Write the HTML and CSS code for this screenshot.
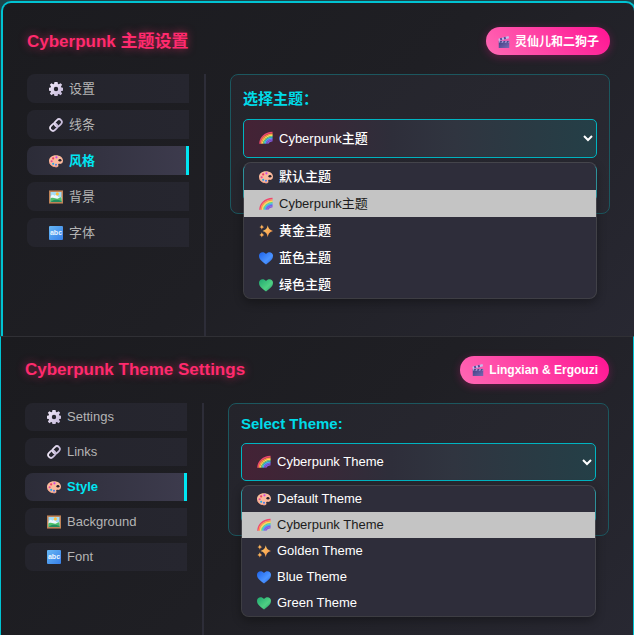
FILE: index.html
```html
<!DOCTYPE html>
<html lang="zh-CN">
<head>
<meta charset="utf-8">
<meta name="viewport" content="width=device-width, initial-scale=1">
<title>Cyberpunk</title>
<link rel="stylesheet" href="styles.css">
</head>
<body>
<svg class="sprite" aria-hidden="true">
  <defs>
    <linearGradient id="g-steel" x1="0" y1="0" x2="1" y2="1"><stop offset="0" stop-color="#f4ecfb"/><stop offset="1" stop-color="#c0b4d6"/></linearGradient>
    <linearGradient id="g-star" x1="0" y1="0" x2="1" y2="1"><stop offset="0" stop-color="#ffd36a"/><stop offset="1" stop-color="#f98a45"/></linearGradient>
    <linearGradient id="g-blue" x1="0" y1="0" x2="1" y2="1"><stop offset="0" stop-color="#1d62e8"/><stop offset=".6" stop-color="#4b93ff"/><stop offset="1" stop-color="#2266e6"/></linearGradient>
    <linearGradient id="g-green" x1="0" y1="0" x2="1" y2="1"><stop offset="0" stop-color="#1fa870"/><stop offset=".6" stop-color="#4fd083"/><stop offset="1" stop-color="#1f9a6c"/></linearGradient>
    <linearGradient id="g-clap" x1="0" y1="0" x2="1" y2="1"><stop offset="0" stop-color="#3c3f80"/><stop offset="1" stop-color="#7a68b4"/></linearGradient>
  </defs>
  <symbol id="i-gear" viewBox="0 0 32 32">
    <g fill="url(#g-steel)">
      <path fill-rule="evenodd" d="M12.500 0h7l1 4.500 2 .8L26.500 3 30 6.500l-2.600 4 .8 2L32 13v7l-3.800.5-.8 2 2.600 4-3.500 3.500-4-2.600-2 .8-1 3.800h-7l-1-3.800-2-.8-4 2.600L2 26.500l2.600-4-.8-2L0 20v-7l3.800-.5.8-2L2 6.500 5.500 3l4 2.300 2-.8zM16 11a5 5 0 1 0 0 10 5 5 0 0 0 0-10z"/>
    </g>
  </symbol>
  <symbol id="i-link" viewBox="0 0 32 32">
    <g fill="none" stroke="url(#g-steel)" stroke-width="4">
      <rect x="12" y="4.500" width="18" height="13" rx="6.500" transform="rotate(-45 21 11)"/>
      <rect x="2" y="14.500" width="18" height="13" rx="6.500" transform="rotate(-45 11 21)"/>
    </g>
  </symbol>
  <symbol id="i-palette" viewBox="0 0 32 32">
    <path d="M16 3C6 3 0 9 0 15.500 0 24 7 30 16 30c4 0 6-1.500 5-4-.8-2.500 1-4 3.500-3.500C29 23.500 32 20 32 15 32 8 25 3 16 3z" fill="#fbb99c"/>
    <path d="M1 19c2 7 8 10 15 10 4 0 6-1 5-3" fill="none" stroke="#e58f7e" stroke-width="1.500"/>
    <ellipse cx="25" cy="14.500" rx="3.500" ry="2.800" fill="#25212b"/>
    <circle cx="17" cy="7.500" r="2.500" fill="#c746e8"/><circle cx="9.500" cy="10" r="2.500" fill="#ee3f62"/>
    <circle cx="6" cy="16.500" r="2.400" fill="#e1489b"/><circle cx="9.500" cy="22.500" r="2.400" fill="#28a9e0"/>
    <circle cx="16" cy="24.500" r="2.400" fill="#4b7df0"/>
  </symbol>
  <symbol id="i-picture" viewBox="0 0 32 32">
    <path d="M0 1h32v30H0z" fill="#c08357"/><path d="M3.500 4.500h25v23h-25z" fill="#a3ddf8"/>
    <path d="M4 15c2-5 6-5 8-2 4-4 8 0 9 3h7.500v5H3.500z" fill="#eef8fd"/>
    <circle cx="19" cy="9" r="3.600" fill="#ffbf3c"/>
    <path d="M3.500 19c7-3 11 1 15 1s6-5 10-3v10.500h-25z" fill="#4fc06b"/>
    <path d="M3.500 27.500C12 20 20 22 28.500 25v2.500z" fill="#238c61"/>
  </symbol>
  <symbol id="i-rainbow" viewBox="0 0 32 32">
    <g fill="none" stroke-width="3.400">
      <path d="M2 29C3 14 14 4 31 3.500" stroke="#f0466d"/><path d="M5 29C6 16 16 7.500 31 6.700" stroke="#ff9248"/>
      <path d="M8 29C9 18 18 10.500 31 9.800" stroke="#ffdc58"/><path d="M11 29c1-9 9-15.500 20-16.200" stroke="#61d68a"/>
      <path d="M14 29c1-7 7-12.500 17-13.200" stroke="#3fb3f2"/><path d="M17 29c1-6 6-9.500 14-10.200" stroke="#825be0"/>
      <path d="M20 29c1-4 5-6 11-7" stroke="#825be0"/>
    </g>
  </symbol>
  <symbol id="i-sparkles" viewBox="0 0 32 32">
    <g fill="url(#g-star)"><path d="M20 3c2 8 4 10.500 12 13-8 2.500-10 5-12 14-2-9-4-11.500-12-14 8-2.500 10-5 12-13z"/>
    <path d="M6.500 1c1.300 4 2 4.700 5.500 6-3.500 1.300-4.200 2-5.500 6-1.300-4-2-4.700-5.500-6 3.500-1.300 4.200-2 5.500-6z"/>
    <path d="M6.500 19c1.300 4 2 4.700 5.500 6-3.500 1.300-4.200 2-5.500 6-1.300-4-2-4.700-5.500-6 3.500-1.300 4.200-2 5.500-6z"/></g>
  </symbol>
  <symbol id="i-heart" viewBox="0 0 32 32">
    <path d="M16 31C8 25 0 20 0 11 0 2 11 0 16 7 21 0 32 2 32 11c0 9-8 14-16 20z"/>
  </symbol>
  <symbol id="i-clapper" viewBox="0 0 32 32">
    <path d="M2 13h28v19H2z" fill="url(#g-clap)"/>
    <path d="M1 7L28 0l1.500 6L2.500 13z" fill="#c3bdea"/><path d="M5 6l5-1.300 1.500 6-5 1.300zM15 3.400l5-1.300 1.500 6-5 1.300z" fill="#5a4a98"/>
    <path d="M2 13h28v5H2z" fill="#a8a0db"/><path d="M6 13h5l-2 5H4zM15 13h5l-2 5h-5zM24 13h5l-2 5h-5z" fill="#4b4488"/>
  </symbol>
</svg>

<section class="panel panel-zh" lang="zh-CN">
  <header class="head">
    <h1>Cyberpunk 主题设置</h1>
    <a class="chip" href="#"><svg class="icon"><use href="#i-clapper"/></svg>灵仙儿和二狗子</a>
  </header>
  <div class="body">
    <nav class="side">
      <button type="button" class="tab"><svg class="icon"><use href="#i-gear"/></svg>设置</button>
      <button type="button" class="tab"><svg class="icon"><use href="#i-link"/></svg>线条</button>
      <button type="button" class="tab active"><svg class="icon"><use href="#i-palette"/></svg>风格</button>
      <button type="button" class="tab"><svg class="icon"><use href="#i-picture"/></svg>背景</button>
      <button type="button" class="tab"><span class="icon abc" aria-hidden="true">abc</span>字体</button>
    </nav>
    <main class="card">
      <label class="label" for="theme-zh">选择主题：</label>
      <div class="picker">
        <select id="theme-zh"><option>Cyberpunk主题</option></select>
        <svg class="icon lead"><use href="#i-rainbow"/></svg>
        <svg class="caret" viewBox="0 0 10 7"><path d="M1 1l4 4 4-4"/></svg>
        <ul class="menu" role="listbox">
          <li role="option"><svg class="icon"><use href="#i-palette"/></svg>默认主题</li>
          <li role="option" class="current" aria-selected="true"><svg class="icon"><use href="#i-rainbow"/></svg>Cyberpunk主题</li>
          <li role="option"><svg class="icon"><use href="#i-sparkles"/></svg>黄金主题</li>
          <li role="option"><svg class="icon blue"><use href="#i-heart"/></svg>蓝色主题</li>
          <li role="option"><svg class="icon green"><use href="#i-heart"/></svg>绿色主题</li>
        </ul>
      </div>
      <div class="preview"></div>
    </main>
  </div>
</section>

<section class="panel panel-en" lang="en">
  <header class="head">
    <h1>Cyberpunk Theme Settings</h1>
    <a class="chip" href="#"><svg class="icon"><use href="#i-clapper"/></svg>Lingxian &amp; Ergouzi</a>
  </header>
  <div class="body">
    <nav class="side">
      <button type="button" class="tab"><svg class="icon"><use href="#i-gear"/></svg>Settings</button>
      <button type="button" class="tab"><svg class="icon"><use href="#i-link"/></svg>Links</button>
      <button type="button" class="tab active"><svg class="icon"><use href="#i-palette"/></svg>Style</button>
      <button type="button" class="tab"><svg class="icon"><use href="#i-picture"/></svg>Background</button>
      <button type="button" class="tab"><span class="icon abc" aria-hidden="true">abc</span>Font</button>
    </nav>
    <div class="card">
      <label class="label" for="theme-en">Select Theme:</label>
      <div class="picker">
        <select id="theme-en"><option>Cyberpunk Theme</option></select>
        <svg class="icon lead"><use href="#i-rainbow"/></svg>
        <svg class="caret" viewBox="0 0 10 7"><path d="M1 1l4 4 4-4"/></svg>
        <ul class="menu" role="listbox">
          <li role="option"><svg class="icon"><use href="#i-palette"/></svg>Default Theme</li>
          <li role="option" class="current" aria-selected="true"><svg class="icon"><use href="#i-rainbow"/></svg>Cyberpunk Theme</li>
          <li role="option"><svg class="icon"><use href="#i-sparkles"/></svg>Golden Theme</li>
          <li role="option"><svg class="icon blue"><use href="#i-heart"/></svg>Blue Theme</li>
          <li role="option"><svg class="icon green"><use href="#i-heart"/></svg>Green Theme</li>
        </ul>
      </div>
      <div class="preview"></div>
    </div>
  </div>
</section>
</body>
</html>
```
FILE: styles.css
```css
* { box-sizing: border-box; }

body {
  margin: 0;
  min-height: 100vh;
  display: grid;
  grid-template-rows: 336fr 299fr;
  background: #1c454b;
  color: #fff;
  font: 13px/20px "Liberation Sans", "Noto Sans CJK SC", sans-serif;
  overflow: hidden;
}

.sprite { position: absolute; width: 0; height: 0; }

.panel {
  display: flex;
  flex-direction: column;
  background: linear-gradient(135deg, #1b1b1f 0%, #1f1f24 50%, #282832 100%);
}
.panel-zh {
  margin: 1px -2px 0 1px;
  padding: 24px 24px 0;
  border: 2px solid #00c3d2;
  border-bottom: 0;
  border-radius: 10px 10px 0 0;
}
.panel-en {
  padding: 19px 24px 0;
  border: 1px solid #00c3d2;
  border-top-color: #303035;
  border-bottom: 0;
}

.head {
  display: flex;
  align-items: center;
  justify-content: space-between;
  height: 28px;
  margin-bottom: 19px;
}
h1 {
  margin: 0;
  font-size: 17px;
  line-height: 24px;
  color: #ff2a6d;
  text-shadow: 0 0 8px rgba(255, 42, 109, .6);
}
.chip {
  display: flex;
  align-items: center;
  gap: 5px;
  height: 28px;
  padding: 0 11px 0 12px;
  border-radius: 14px;
  background: linear-gradient(45deg, #ff69b4, #ff1493);
  box-shadow: 0 2px 8px rgba(255, 20, 147, .3);
  color: #fff;
  font-size: 12px;
  font-weight: 700;
  text-decoration: none;
}
.panel-zh h1,
.panel-zh .chip { padding-top: 2px; }

.icon { width: 14px; height: 14px; flex: none; }
.chip .icon { width: 12px; height: 12px; }
.blue { fill: url(#g-blue); }
.green { fill: url(#g-green); }
.abc {
  border-radius: 1px;
  background: linear-gradient(135deg, #66b7f5, #377fe8);
  color: #eaf5ff;
  font-size: 7px;
  font-weight: 700;
  line-height: 13px;
  text-align: center;
}

.body { flex: 1; display: flex; gap: 24px; align-items: flex-start; }

.side {
  align-self: stretch;
  width: 179px;
  display: flex;
  flex-direction: column;
  gap: 7px;
  padding-right: 15px;
  border-right: 2px solid #2d2d38;
}
.tab {
  display: flex;
  align-items: center;
  gap: 6px;
  height: 28px;
  padding: 0 0 0 22px;
  border: 0;
  border-radius: 8px 0 0 8px;
  background: linear-gradient(90deg, #24242c, #26262f);
  color: #b4b4b4;
  font: inherit;
  text-align: left;
}
.panel-zh .tab { height: 29px; }
.tab.active {
  border-right: 3px solid #00e5f2;
  background: linear-gradient(90deg, #2c2c38, #3d3b4d);
  color: #00e5f2;
  font-weight: 700;
}

.card {
  flex: 1;
  padding: 12px;
  border: 1px solid #1c575f;
  border-radius: 8px;
  background: linear-gradient(135deg, #24242b, #292932);
}
.label {
  display: block;
  margin-bottom: 8px;
  color: #00dbe8;
  font-size: 15px;
  font-weight: 700;
  line-height: 24px;
}
.panel-en .label { margin-bottom: 11px; line-height: 16px; }

.picker { position: relative; font-weight: 500; }
select {
  display: block;
  appearance: none;
  width: 100%;
  height: 38px;
  padding: 0 30px 0 35px;
  border: 1px solid #00b4c1;
  border-radius: 5px;
  background: linear-gradient(90deg, #442235 0%, #2e2e3a 42%, #303540 60%, #243f47 100%);
  color: #fff;
  font: inherit;
}
.panel-zh select { height: 39px; }
.lead { position: absolute; left: 16px; top: 12px; }
.caret {
  position: absolute;
  right: 4px;
  top: 16px;
  width: 10px;
  height: 7px;
  fill: none;
  stroke: #fff;
  stroke-width: 2;
}

.menu {
  position: absolute;
  z-index: 1;
  top: 100%;
  left: 0;
  right: 0;
  margin: 4px 0 0;
  padding: 0;
  border: 1px solid rgba(130, 130, 135, .35);
  border-radius: 8px;
  background: #2e2d3a;
  background-clip: padding-box;
  box-shadow: 0 4px 10px rgba(0, 0, 0, .3);
  list-style: none;
}
.menu li {
  display: flex;
  align-items: center;
  gap: 6px;
  height: 26px;
  padding: 0 15px;
}
.panel-zh .menu li { height: 27px; }
.menu .current { background: #c4c4c4; color: #1c1c20; font-weight: 400; }

.preview {
  height: 36px;
  margin-top: 7px;
  border: 1px solid #00b4c1;
  border-radius: 5px;
}
.panel-en .preview { height: 35px; }
```
